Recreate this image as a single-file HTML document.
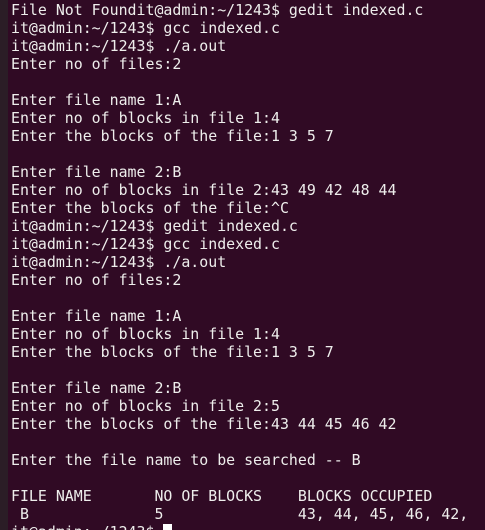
<!DOCTYPE html>
<html><head><meta charset="utf-8"><style>
html,body{margin:0;padding:0;width:485px;height:530px;overflow:hidden;}
body{background:#300a24;position:relative;}
.strip{position:absolute;left:0;top:0;width:8px;height:530px;background:#2b1d26;}
pre{position:absolute;left:11px;top:1px;margin:0;font-family:"DejaVu Sans Mono","Liberation Mono",monospace;font-size:14.9px;line-height:18px;color:#eeeeec;white-space:pre;}
.cur{display:inline-block;width:9px;height:16px;background:#fff;vertical-align:top;margin-top:1px;}
</style></head><body><div class="strip"></div><pre>File Not Foundit@admin:~/1243$ gedit indexed.c
it@admin:~/1243$ gcc indexed.c
it@admin:~/1243$ ./a.out
Enter no of files:2

Enter file name 1:A
Enter no of blocks in file 1:4
Enter the blocks of the file:1 3 5 7

Enter file name 2:B
Enter no of blocks in file 2:43 49 42 48 44
Enter the blocks of the file:^C
it@admin:~/1243$ gedit indexed.c
it@admin:~/1243$ gcc indexed.c
it@admin:~/1243$ ./a.out
Enter no of files:2

Enter file name 1:A
Enter no of blocks in file 1:4
Enter the blocks of the file:1 3 5 7

Enter file name 2:B
Enter no of blocks in file 2:5
Enter the blocks of the file:43 44 45 46 42

Enter the file name to be searched -- B

FILE NAME       NO OF BLOCKS    BLOCKS OCCUPIED
 B              5               43, 44, 45, 46, 42,
it@admin:~/1243$ <span class="cur"></span></pre></body></html>
